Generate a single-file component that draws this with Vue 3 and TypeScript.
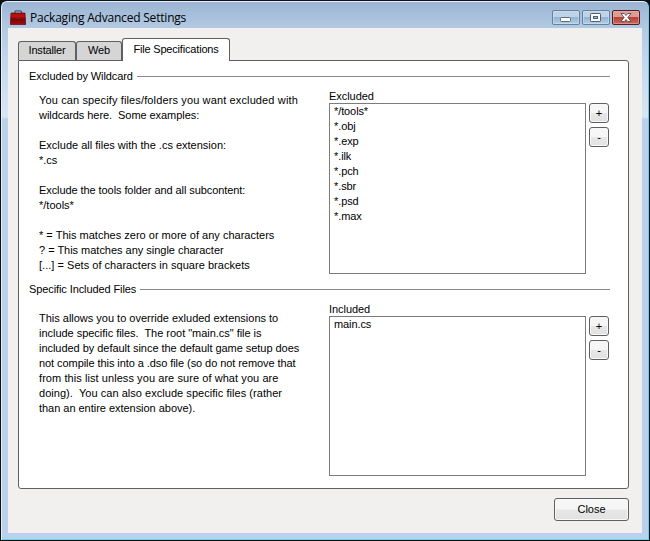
<script setup lang="ts">
import { ref } from 'vue'

interface HelpLine {
  text: string
  tracking?: number
}

interface Section {
  title: string
  listLabel: string
  files: string[]
  help: HelpLine[]
  kind: string
}

const tabs = ['Installer', 'Web', 'File Specifications']
const activeTab = ref(2)

const sections: Section[] = [
  {
    title: 'Excluded by Wildcard',
    listLabel: 'Excluded',
    files: ['*/tools*', '*.obj', '*.exp', '*.ilk', '*.pch', '*.sbr', '*.psd', '*.max'],
    help: [
      { text: 'You can specify files/folders you want excluded with', tracking: 0.13 },
      { text: 'wildcards here.  Some examples:', tracking: -0.06 },
      { text: '' },
      { text: 'Exclude all files with the .cs extension:', tracking: 0 },
      { text: '*.cs', tracking: -0.07 },
      { text: '' },
      { text: 'Exclude the tools folder and all subcontent:', tracking: -0.08 },
      { text: '*/tools*', tracking: 0 },
      { text: '' },
      { text: '* = This matches zero or more of any characters', tracking: 0.01 },
      { text: '? = This matches any single character', tracking: -0.02 },
      { text: '[...] = Sets of characters in square brackets', tracking: 0.03 },
    ],
    kind: 'excluded',
  },
  {
    title: 'Specific Included Files',
    listLabel: 'Included',
    files: ['main.cs'],
    help: [
      { text: 'This allows you to override exluded extensions to', tracking: -0.01 },
      { text: 'include specific files.  The root "main.cs" file is', tracking: -0.03 },
      { text: 'included by default since the default game setup does', tracking: -0.04 },
      { text: 'not compile this into a .dso file (so do not remove that', tracking: -0.07 },
      { text: 'from this list unless you are sure of what you are', tracking: 0.07 },
      { text: 'doing).  You can also exclude specific files (rather', tracking: 0.04 },
      { text: 'than an entire extension above).', tracking: -0.03 },
    ],
    kind: 'included',
  },
]
</script>

<template>
  <div class="desktop">
    <div class="window">
      <header class="titlebar">
        <svg class="app-icon" width="16" height="16" viewBox="0 0 16 16">
          <defs>
            <linearGradient id="case" x1="0" y1="0" x2="0" y2="1">
              <stop offset="0" stop-color="#a90d0d" />
              <stop offset="0.45" stop-color="#c81414" />
              <stop offset="0.55" stop-color="#7c0505" />
              <stop offset="1" stop-color="#a80a0a" />
            </linearGradient>
          </defs>
          <path d="M5 3.500V2Q5 .8 6.500 .8H10Q11.500 .8 11.500 2V3.500" fill="none" stroke="#4b5560" stroke-width="1.300" />
          <path d="M1 3H15L15.700 14.500H.3Z" fill="url(#case)" stroke="#5d0909" stroke-width=".7" />
          <path d="M.8 8H15.200" stroke="#5d0303" stroke-width=".8" />
          <path d="M7.500 6.800H9V9H7.500Z" fill="#8c2020" />
        </svg>
        <h1>Packaging Advanced Settings</h1>
        <div class="controls">
          <button class="ctl" aria-label="Minimize">
            <svg width="26" height="13" viewBox="0 0 26 13"><rect x="7.500" y="6.500" width="10" height="4" rx="1" fill="#fff" stroke="#5c6774" /></svg>
          </button>
          <button class="ctl" aria-label="Maximize">
            <svg width="26" height="13" viewBox="0 0 26 13"><rect x="7.500" y="2.500" width="10" height="8" rx=".7" fill="#f7f8fa" stroke="#535f6c" /><rect x="10.500" y="5.500" width="4" height="2" fill="#9fb9d4" stroke="#535f6c" /></svg>
          </button>
          <button class="ctl close" aria-label="Close window">
            <svg width="26" height="13" viewBox="0 0 26 13"><path d="M8 2.500H11.300L13 4.500L14.700 2.500H18L14.900 6.500L18 10.500H14.700L13 8.500L11.300 10.500H8L11.100 6.500Z" fill="#fff" stroke="#5b4a55" stroke-width=".9" /></svg>
          </button>
        </div>
      </header>

      <main class="client">
        <nav class="tabs">
          <button
            v-for="(tab, i) in tabs"
            :key="tab"
            class="tab"
            :class="{ active: i === activeTab }"
            @click="activeTab = i"
          ><span>{{ tab }}</span></button>
        </nav>
        <div class="panel">
          <section v-for="s in sections" :key="s.kind" :class="s.kind">
            <div class="heading"><h2>{{ s.title }}</h2><i class="rule"></i></div>
            <div class="body">
              <div class="help">
                <p
                  v-for="(line, i) in s.help"
                  :key="i"
                  :style="{ letterSpacing: (line.tracking ?? 0) + 'px' }"
                >{{ line.text }}</p>
              </div>
              <div class="list">
                <label>{{ s.listLabel }}</label>
                <ul>
                  <li v-for="f in s.files" :key="f">{{ f }}</li>
                </ul>
              </div>
              <div class="side">
                <button class="btn small">+</button>
                <button class="btn small">-</button>
              </div>
            </div>
          </section>
        </div>
        <footer><button class="btn close-btn">Close</button></footer>
      </main>
    </div>
  </div>
</template>

<style>
body {
  margin: 0;
  overflow: hidden;
}
</style>

<style scoped>
* {
  box-sizing: border-box;
  margin: 0;
  padding: 0;
}
.desktop {
  width: 650px;
  height: 541px;
  background: #0b1116;
  font: 11px/15px "Liberation Sans", Arial, sans-serif;
  color: #000;
  padding: 1px;
}
button {
  font: inherit;
  color: inherit;
}
.window {
  width: 648px;
  height: 539px;
  border: 1px solid #e6f1fa;
  border-right-color: #65cfe9;
  border-bottom-color: #65d5ef;
  border-radius: 6px 6px 0 0;
  background: linear-gradient(#9bb5d3 0, #b3cae3 27px, #c3d8ed 60px, #d8e6f4 115px, #b9d1ea 117px, #b9d1ea 100%);
  padding: 0 6px 5px 6px;
}
.titlebar {
  height: 26px;
  display: flex;
  align-items: flex-start;
}
.app-icon {
  margin: 8px 0 0 2px;
}
h1 {
  font: 12px/16px "Open Sans", "Noto Sans", sans-serif;
  letter-spacing: -0.2px;
  margin: 8px 0 0 4px;
  white-space: nowrap;
}
.controls {
  display: flex;
  gap: 2px;
  margin: 8px 2px 0 auto;
}
.ctl {
  width: 28px;
  height: 15px;
  border: 1px solid #6681a0;
  border-radius: 2px;
  background: linear-gradient(#bed2e8 0 45%, #94b3d4 50%, #b4cee8);
  box-shadow: inset 0 0 0 1px #d1e0ef99;
}
.ctl svg {
  display: block;
}
.ctl.close {
  border-color: #571d24;
  background: linear-gradient(#dc9e94 0 45%, #b84434 50%, #c9685a);
  box-shadow: inset 0 0 0 1px #e8b4ab88;
}
.client {
  width: 634px;
  height: 505px;
  background: #f1f0ef;
  padding: 10px 13px 0 10px;
}
.tabs {
  height: 22px;
  display: flex;
  align-items: flex-end;
}
.tab {
  height: 19px;
  border: 1px solid #606060;
  border-bottom: 0;
  border-radius: 3px 3px 0 0;
  background: #d5d5d5;
  letter-spacing: -0.18px;
}
.tab:nth-child(1) {
  width: 58px;
}
.tab:nth-child(2) {
  width: 46px;
}
.tab.active {
  width: 108px;
  height: 23px;
  background: #fff;
  position: relative;
  margin-bottom: -1px;
}
.tab span {
  display: block;
  padding-bottom: 2px;
}
.panel {
  height: 429px;
  border: 1px solid #606060;
  border-radius: 0 3px 3px 3px;
  background: #fff;
  padding: 8px 18px 0 10px;
}
.excluded {
  height: 213px;
}
.heading {
  height: 15px;
  display: flex;
  align-items: center;
  gap: 4px;
}
h2 {
  font: inherit;
  letter-spacing: -0.1px;
  white-space: nowrap;
}
.rule {
  flex: 1;
  height: 1px;
  background: #8b8b8b;
}
.body {
  display: grid;
  grid-template-columns: 300px 257px 23px;
}
.side {
  padding: 19px 0 0 3px;
  display: flex;
  flex-direction: column;
  gap: 4px;
}
.help {
  padding: 9px 0 0 10px;
}
.help p {
  height: 15px;
  white-space: pre;
}
.list label {
  display: block;
  height: 14px;
  margin-top: 5px;
  letter-spacing: -0.05px;
}
.list ul {
  height: 171px;
  border: 1px solid #7c7c7c;
  list-style: none;
  padding-left: 4px;
  letter-spacing: -0.1px;
}
.included .list ul {
  height: 160px;
}
.included .help {
  padding-top: 14px;
}
.btn {
  border: 1px solid #606060;
  border-radius: 3px;
  background: linear-gradient(#f6f6f6 0 48%, #e7e7e7 52%, #e2e2e2);
  box-shadow: inset 0 0 0 1px #f8f8f8;
}
.small {
  width: 20px;
  height: 20px;
  line-height: 18px;
}
.close-btn {
  width: 75px;
  height: 23px;
}
footer {
  display: flex;
  justify-content: flex-end;
  padding-top: 9px;
}
</style>
